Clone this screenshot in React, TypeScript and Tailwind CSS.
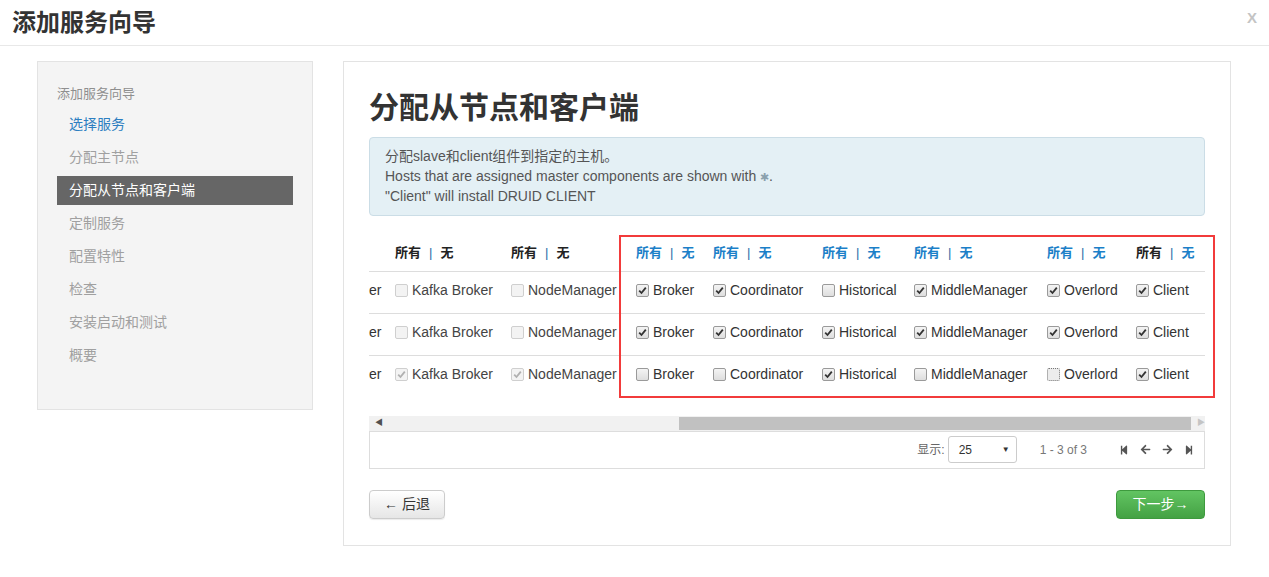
import { FaStepBackward, FaStepForward, FaArrowLeft, FaArrowRight } from "react-icons/fa";

const steps = [
    { label: "选择服务", state: "done" },
    { label: "分配主节点", state: "todo" },
    { label: "分配从节点和客户端", state: "active" },
    { label: "定制服务", state: "todo" },
    { label: "配置特性", state: "todo" },
    { label: "检查", state: "todo" },
    { label: "安装启动和测试", state: "todo" },
    { label: "概要", state: "todo" },
];

type Cell = { on: boolean; disabled?: boolean; focus?: boolean };

const columns = [
    { name: "Kafka Broker", head: "dark" },
    { name: "NodeManager", head: "dark" },
    { name: "Broker", head: "blue" },
    { name: "Coordinator", head: "blue" },
    { name: "Historical", head: "blue" },
    { name: "MiddleManager", head: "blue" },
    { name: "Overlord", head: "blue" },
    { name: "Client", head: "mixed" },
];

const rows: Cell[][] = [
    [
        { on: false, disabled: true },
        { on: false, disabled: true },
        { on: true },
        { on: true },
        { on: false },
        { on: true },
        { on: true },
        { on: true },
    ],
    [
        { on: false, disabled: true },
        { on: false, disabled: true },
        { on: true },
        { on: true },
        { on: true },
        { on: true },
        { on: true },
        { on: true },
    ],
    [
        { on: true, disabled: true },
        { on: true, disabled: true },
        { on: false },
        { on: false },
        { on: true },
        { on: false },
        { on: false, focus: true },
        { on: true },
    ],
];

function Checkbox({ on, disabled, focus }: Cell) {
    const box = disabled
        ? "border-[#cfcfcf] bg-[#f3f3f3]"
        : focus
          ? "border-dotted border-[#777] bg-[#ececec]"
          : "border-[#9a9a9a] bg-gradient-to-b from-[#f4f4f4] to-[#dedede]";
    return (
        <span
            className={`flex h-[13px] w-[13px] shrink-0 items-center justify-center rounded-[2px] border ${box}`}
        >
            {on && (
                <svg width="9" height="9" viewBox="0 0 9 9">
                    <path
                        d="M1.2 4.6 L3.5 7 L7.8 1.6"
                        fill="none"
                        stroke={disabled ? "#b0b0b0" : "#333"}
                        strokeWidth="1.8"
                    />
                </svg>
            )}
        </span>
    );
}

function HeadLinks({ head }: { head: string }) {
    const all = head === "blue" ? "text-[#1b7fc8]" : "text-[#222]";
    const none = head === "dark" ? "text-[#222]" : "text-[#1b7fc8]";
    return (
        <span className="flex items-center text-[13px] font-bold">
            <span className={all}>所有</span>
            <span className="mx-[8px] font-normal text-[#2a6ea8]">|</span>
            <span className={none}>无</span>
        </span>
    );
}

export default function App() {
    return (
        <div className="min-h-[577px] bg-white font-['Liberation_Sans','Noto_Sans_CJK_SC',sans-serif] text-[#333]">
            <header className="flex h-[46px] items-center justify-between border-b border-[#e8e8e8] pl-[12px] pr-[12px]">
                <h1 className="text-[24px] font-bold leading-none text-[#333]">添加服务向导</h1>
                <span className="mb-[8px] text-[15px] font-bold text-[#c4c4c4]">X</span>
            </header>

            <div className="flex gap-[30px] pl-[37px] pt-[15px]">
                {/* wizard steps */}
                <aside className="h-[349px] w-[276px] border border-[#e3e3e3] bg-[#f4f4f4] px-[19px] pt-[24px]">
                    <div className="mb-[8px] h-[16px] text-[13px] leading-[16px] text-[#8f8f8f]">添加服务向导</div>
                    <ul className="flex flex-col gap-[4px]">
                        {steps.map((s) => (
                            <li
                                key={s.label}
                                className={
                                    "flex h-[29px] items-center pl-[12px] text-[14px] " +
                                    (s.state === "active"
                                        ? "bg-[#666] text-white"
                                        : s.state === "done"
                                          ? "text-[#2d7fc1]"
                                          : "text-[#a0a0a0]")
                                }
                            >
                                {s.label}
                            </li>
                        ))}
                    </ul>
                </aside>

                {/* main panel */}
                <main className="h-[485px] w-[888px] border border-[#e3e3e3] px-[25px] pt-[29px]">
                    <h2 className="text-[30px] font-bold leading-[33px] text-[#333]">分配从节点和客户端</h2>

                    <div className="mt-[13px] rounded-[4px] border border-[#cbdde6] bg-[#e4f0f5] px-[15px] pb-[8px] pt-[9px] text-[14px] leading-[19.5px] text-[#555]">
                        <p>分配slave和client组件到指定的主机。</p>
                        <p>
                            Hosts that are assigned master components are shown with{" "}
                            <span className="text-[11px] text-[#8aa0ad]">✱</span>.
                        </p>
                        <p>"Client" will install DRUID CLIENT</p>
                    </div>

                    <div className="relative mt-[19px] w-[836px]">
                        <div className="grid grid-cols-[26px_116px_125px_77px_109px_92px_133px_89px_69px] text-[14px]">
                            <div className="h-[36px]" />
                            {columns.map((c) => (
                                <div key={c.name} className="flex h-[36px] items-center">
                                    <HeadLinks head={c.head} />
                                </div>
                            ))}

                            {rows.map((r, ri) => (
                                <div key={ri} className="contents">
                                    <div className="flex h-[42px] items-center border-t border-[#dddddd] pb-[4px]">
                                        <span className="whitespace-nowrap">er</span>
                                    </div>
                                    {r.map((cell, ci) => (
                                        <div
                                            key={ci}
                                            className="flex h-[42px] items-center gap-[4px] whitespace-nowrap border-t border-[#dddddd] pb-[4px]"
                                        >
                                            <Checkbox {...cell} />
                                            <span className={cell.disabled ? "text-[#444]" : ""}>{columns[ci].name}</span>
                                        </div>
                                    ))}
                                </div>
                            ))}
                        </div>

                        {/* highlight annotation */}
                        <div className="pointer-events-none absolute left-[250px] top-0 h-[163px] w-[596px] border-2 border-[#f23b3b]" />
                    </div>

                    {/* horizontal scrollbar */}
                    <div className="mt-[19px] flex h-[15px] w-[836px] items-center bg-[#f1f1f1]">
                        <span className="ml-[6px] text-[8px] leading-none text-[#505050]">◀</span>
                        <div className="ml-[296px] h-[13px] w-[516px] bg-[#c1c1c1]" />
                        <span className="ml-[6px] text-[8px] leading-none text-[#c4c4c4]">▶</span>
                    </div>

                    {/* pagination */}
                    <div className="flex h-[38px] w-[836px] items-center justify-end border border-[#dddddd] pr-[10px] text-[12px] text-[#666]">
                        <span className="mr-[3px]">显示:</span>
                        <div className="flex h-[27px] w-[69px] items-center justify-between rounded-[3px] border border-[#cccccc] pl-[10px] pr-[6px] text-[#333]">
                            <span>25</span>
                            <span className="text-[8px]">▼</span>
                        </div>
                        <span className="ml-[23px] mr-[32px] text-[#777]">1 - 3 of 3</span>
                        <div className="flex items-center gap-[11px] text-[#555]">
                            <FaStepBackward size={10} />
                            <FaArrowLeft size={11} />
                            <FaArrowRight size={11} />
                            <FaStepForward size={10} />
                        </div>
                    </div>

                    <div className="mt-[21px] flex w-[836px] items-center justify-between">
                        <button className="h-[29px] w-[76px] rounded-[4px] border border-[#cccccc] bg-gradient-to-b from-white to-[#e6e6e6] text-[14px] text-[#333] shadow-[0_1px_1px_rgba(0,0,0,0.08)]">
                            ← 后退
                        </button>
                        <button className="h-[29px] w-[89px] rounded-[4px] border border-[#3e9a3e] bg-gradient-to-b from-[#62c462] to-[#44a244] text-[14px] text-white">
                            下一步→
                        </button>
                    </div>
                </main>
            </div>
        </div>
    );
}
